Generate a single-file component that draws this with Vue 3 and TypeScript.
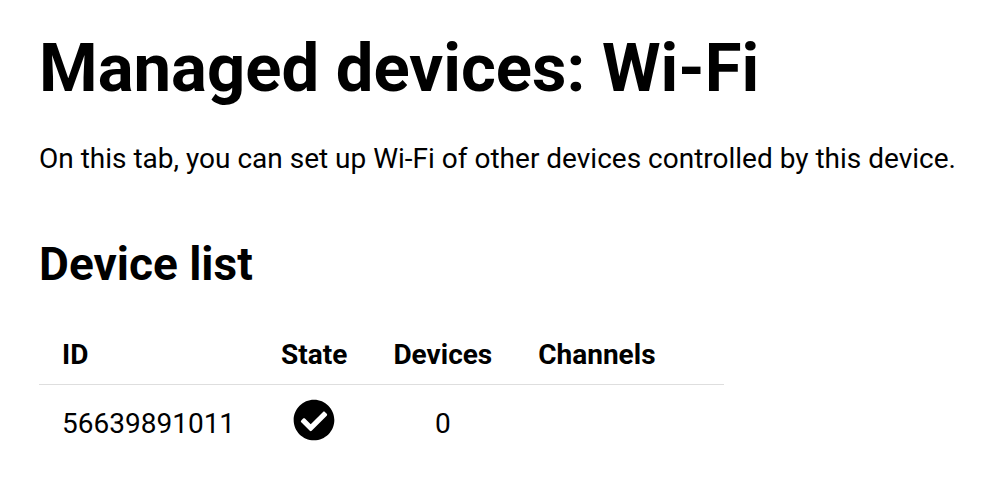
<script setup lang="ts">
interface Device {
  id: string
  ready: boolean
  devices: number
  channels: string
}

const devices: Device[] = [{ id: '56639891011', ready: true, devices: 0, channels: '' }]
</script>

<template>
  <main class="page">
    <h1>Managed devices: Wi-Fi</h1>
    <p>On this tab, you can set up Wi-Fi of other devices controlled by this device.</p>
    <section>
      <h2>Device list</h2>
      <table>
        <thead>
          <tr>
            <th class="id" scope="col">ID</th>
            <th scope="col">State</th>
            <th scope="col">Devices</th>
            <th class="channels" scope="col">Channels</th>
          </tr>
        </thead>
        <tbody>
          <tr v-for="device in devices" :key="device.id">
            <td class="id">{{ device.id }}</td>
            <td>
              <svg v-if="device.ready" class="state" viewBox="0 0 512 512" role="img" aria-label="Ready">
                <path
                  d="M504 256c0 136.967-111.033 248-248 248S8 392.967 8 256 119.033 8 256 8s248 111.033 248 248zM227.314 387.314l184-184c6.248-6.248 6.248-16.379 0-22.627l-22.627-22.627c-6.248-6.249-16.379-6.249-22.628 0L216 308.118l-70.059-70.059c-6.248-6.248-16.379-6.248-22.628 0l-22.627 22.627c-6.248 6.248-6.248 16.379 0 22.627l104 104c6.249 6.249 16.379 6.249 22.628.001z"
                />
              </svg>
            </td>
            <td>{{ device.devices }}</td>
            <td class="channels">{{ device.channels }}</td>
          </tr>
        </tbody>
      </table>
    </section>
  </main>
</template>

<style>
body {
  margin: 0;
  background: #fff;
}
</style>

<style scoped>
.page {
  padding: 40px 24px 24px 39px;
  color: #000;
  font-family: Roboto, "Liberation Sans", sans-serif;
  font-size: 28px;
  line-height: 40px;
}

h1 {
  margin: 0 0 43px;
  font-size: 67px;
  font-weight: 700;
  line-height: 56px;
}

p {
  margin: 0 0 59px;
}

h2 {
  margin: 0 0 33px;
  font-size: 46px;
  font-weight: 700;
  line-height: 52px;
}

table {
  border-collapse: collapse;
}

th,
td {
  padding: 14px 23px;
  text-align: center;
  vertical-align: baseline;
}

th {
  padding-top: 12px;
  padding-bottom: 9px;
  border-bottom: 1px solid #dedede;
  font-weight: 700;
}

.id {
  text-align: left;
}

.channels {
  padding-right: 68px;
  text-align: left;
}

.state {
  width: 42px;
  height: 42px;
  vertical-align: -8px;
}
</style>
